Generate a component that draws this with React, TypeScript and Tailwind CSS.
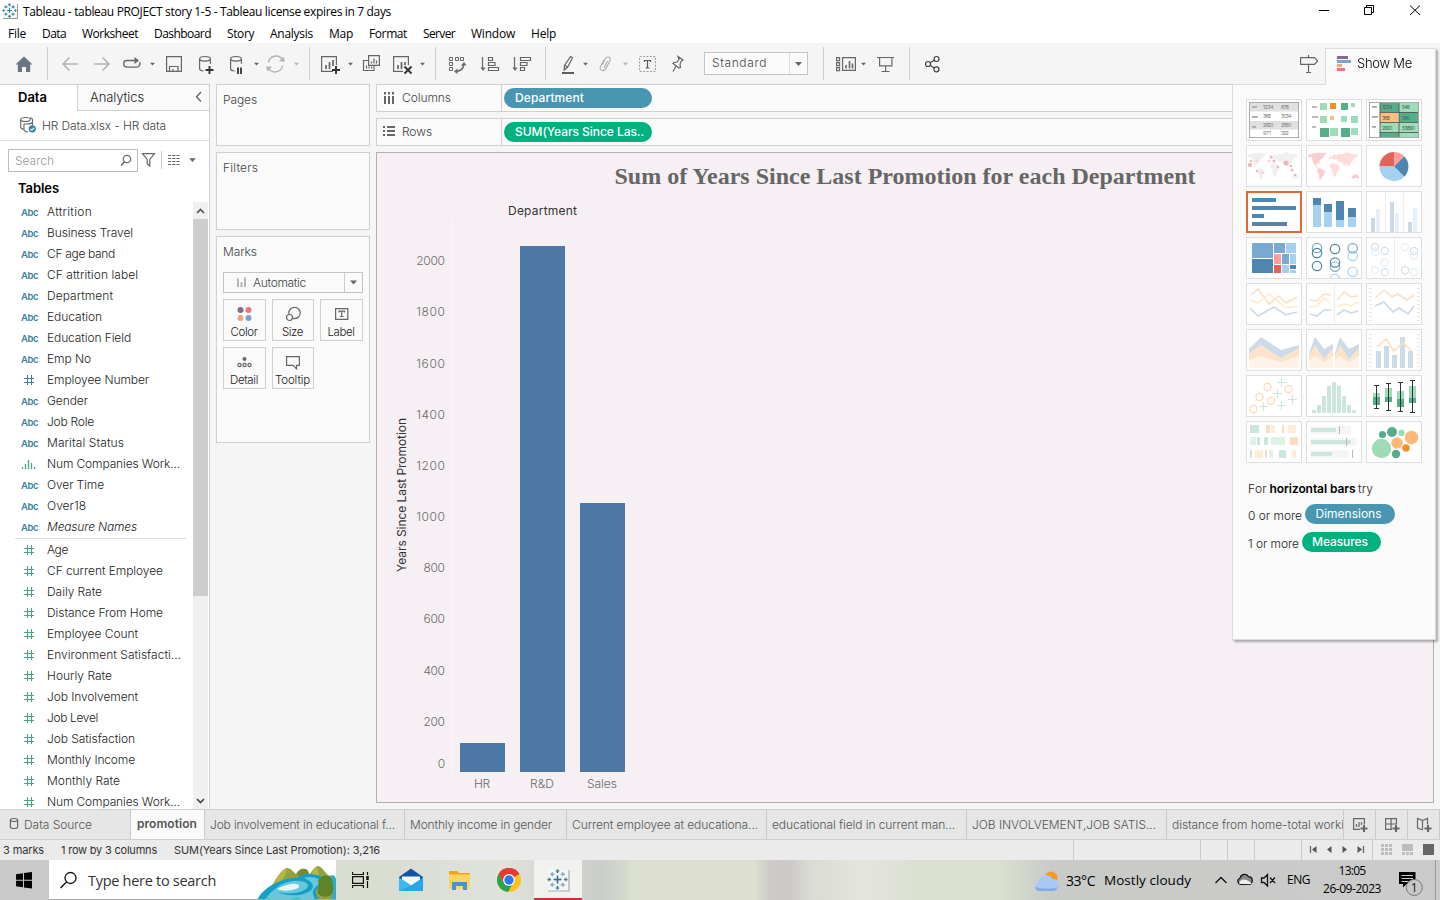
import React, { useLayoutEffect, useRef } from "react";

type Kids = { children?: React.ReactNode };

/* Single line of text whose tracking is adjusted so that it spans `w` pixels. */
function T({ w, className = "", children }: { w?: number; className?: string; children: string }) {
  const ref = useRef<HTMLSpanElement>(null);
  useLayoutEffect(() => {
    const el = ref.current;
    if (!el || !w) return;
    el.style.letterSpacing = "0px";
    const natural = el.getBoundingClientRect().width;
    el.style.letterSpacing = `${(w - natural) / children.length}px`;
  }, [w, children]);
  return (
    <span ref={ref} className={`inline-block shrink-0 whitespace-pre ${className}`}>
      {children}
    </span>
  );
}

/* Icon drawn in window coordinates. */
function Ico({ x, y, w, h, className = "", children }: { x: number; y: number; w: number; h: number; className?: string } & Kids) {
  return (
    <svg width={w} height={h} viewBox={`${x} ${y} ${w} ${h}`} className={`block shrink-0 ${className}`} fill="none" stroke="#666" strokeWidth="1.2">
      {children}
    </svg>
  );
}

function Tool({ x, w, children }: { x: number; w: number } & Kids) {
  return (
    <Ico x={x} y={43} w={w} h={41}>
      {children}
    </Ico>
  );
}

const Sep = () => <div className="my-1 w-px shrink-0 self-stretch bg-[#cfcfcf]" />;

function Caret({ x, y = 64, c = "#666", s = 2.5 }: { x: number; y?: number; c?: string; s?: number }) {
  return <path d={`M${x - s} ${y - 1.3}h${2 * s}l${-s} ${s + 0.4}z`} fill={c} stroke="none" />;
}

function Spark({ x, y, s, c = "#3f7f9f" }: { x: number; y: number; s: number; c?: string }) {
  const pts: [number, number, number][] = [
    [0, 0, 0.34], [-0.5, -0.5, 0.2], [0.5, -0.5, 0.2], [-0.5, 0.5, 0.2], [0.5, 0.5, 0.2],
    [0, -0.82, 0.18], [0, 0.82, 0.18], [-0.82, 0, 0.18], [0.82, 0, 0.18],
  ];
  return (
    <g stroke={c} strokeWidth={s * 0.15}>
      {pts.map(([a, b, r], i) => (
        <path key={i} d={`M${x + (a - r) * s} ${y + b * s}h${2 * r * s}M${x + a * s} ${y + (b - r) * s}v${2 * r * s}`} />
      ))}
    </g>
  );
}

function TitleBar() {
  return (
    <div className="flex h-[22px] items-center bg-white font-normal">
      <svg width="18" height="22" viewBox="0 0 18 22" className="ml-0.5 shrink-0" fill="none">
        <path d="M1 4h14v14H1z" fill="#f6f6f6" />
        <path d="M15.5 4v14.5H1" stroke="#999" />
        <Spark x={7.5} y={10.5} s={7.2} c="#2f86ad" />
      </svg>
      <T w={368} className="ml-[3px] pt-px font-['Open_Sans'] text-[12px] leading-[22px] text-black">Tableau - tableau PROJECT story 1-5 - Tableau license expires in 7 days</T>
      <div className="flex-1" />
      <Ico x={1310} y={0} w={120} h={22}>
        <g stroke="#000" strokeWidth="1">
          <path d="M1319 10.500h10" />
          <path d="M1364.500 7.500h7v7h-7zM1366.500 7.500v-2h7v7h-2" />
          <path d="M1410 5.500l10 9.500M1420 5.500l-10 9.500" />
        </g>
      </Ico>
      <div className="w-[10px]" />
    </div>
  );
}

const menus: [string, number, string][] = [
  ["File", 18, "ml-2"], ["Data", 24, "ml-4"], ["Worksheet", 56, "ml-4"], ["Dashboard", 57, "ml-4"], ["Story", 27, "ml-4"], ["Analysis", 43, "ml-4"],
  ["Map", 24, "ml-4"], ["Format", 38, "ml-4"], ["Server", 32, "ml-4"], ["Window", 44, "ml-4"], ["Help", 25, "ml-4"],
];

function MenuBar() {
  return (
    <div className="flex h-[21px] bg-white font-['Open_Sans'] text-[12px] leading-[23px] font-normal text-black">
      {menus.map(([m, w, c]) => (
        <T key={m} w={w} className={c}>{m}</T>
      ))}
    </div>
  );
}

function Toolbar() {
  return (
    <div className="flex h-[41px] bg-[#f5f5f5]">
      <Tool x={0} w={47}>
        <path d="M15.500 64.500L24 56.500l8.500 8h-2.300V72h-4.200v-5h-4v5h-4.200v-7.500z" fill="#6b7683" stroke="none" />
      </Tool>
      <Sep />
      <Tool x={48} w={261}>
        <g stroke="#b4b4b4" strokeWidth="1.6">
          <path d="M78 64H63M69.500 57.500L63 64l6.500 6.500" />
          <path d="M94 64h15M102.500 57.500L109 64l-6.500 6.500" />
          <path d="M268.500 62.500a7.500 7.500 0 0 1 14-2.500M282.500 65.500a7.500 7.500 0 0 1-14 2.500" strokeWidth="1.4" />
          <path d="M279 61.500h6l-1.500-5zM272 66.500h-6l1.500 5z" fill="#b4b4b4" stroke="none" />
        </g>
        <path d="M136 60.500h-9a3.300 3.300 0 0 0 0 6.600h9.500a3.300 3.300 0 0 0 3-5" strokeWidth="1.400" />
        <path d="M134.500 57l4.500 3.500-4.500 3.500z" fill="#666" stroke="none" />
        <Caret x={152.500} />
        <path d="M166.600 56.600h14.800v14.800h-14.800zM169.500 71v-4.500h8.500V71M173 71v-2" />
        <g>
          <path d="M199.600 58.800v9.700c0 1.500 1.500 2.300 4 2.500M210.400 58.800v5" />
          <ellipse cx="205" cy="58.800" rx="5.400" ry="2.300" />
          <path d="M209.500 66v8M205.500 70h8" stroke="#333" strokeWidth="1.900" />
        </g>
        <path d="M230.600 58.800v9.700c0 1.500 1.500 2.300 4 2.500M241.400 58.800v5" />
        <ellipse cx="236" cy="58.800" rx="5.400" ry="2.300" />
        <path d="M238 67.500v6.500M241 67.500v6.500" stroke="#333" strokeWidth="1.800" />
        <Caret x={256.500} />
        <Caret x={296.500} c="#b4b4b4" />
      </Tool>
      <Sep />
      <Tool x={310} w={125}>
        <path d="M333 71.400h-11.400V56.600h14.800V65" />
        <path d="M326 69v-4M329.500 69v-7M333 66v-6" strokeWidth="1.700" />
        <path d="M336 66v8M332 70h8" stroke="#333" strokeWidth="1.900" />
        <Caret x={350.500} />
        <path d="M368.600 55.600h10.800v9.800h-10.800zM368 60.500h-4.500v10h10.500v-4.500" />
        <path d="M371.500 63.500v-2M374 63.500v-5M376.500 63.500v-3M366.500 68.500v-3M369 68.500v-2M371.500 68.500v-2" />
        <path d="M403 71.400h-9.400V56.600h14.800V65" />
        <path d="M398 69v-4M401.500 69v-7M405 65v-3" strokeWidth="1.700" />
        <path d="M404.500 66.500l7 7M411.500 66.500l-7 7" stroke="#333" strokeWidth="1.900" />
        <Caret x={422.500} />
      </Tool>
      <Sep />
      <Tool x={436} w={109}>
        <path d="M449.500 57.500h3v3h-3zM455.500 57.500h3v3h-3zM460.500 57.500h3v3h-3zM449.500 62.500h3v3h-3zM449.500 67.500h3v3h-3z" strokeWidth="1" />
        <path d="M463.500 64.500c0 4-3 6.500-7.500 7" strokeWidth="1.500" />
        <path d="M461 65.500l3-3.500 2.500 3.500zM457.500 68.500l-3.500 3 3.500 2.500z" fill="#666" stroke="none" />
        <path d="M482.500 57v12M514.500 57v12" strokeWidth="1.200" />
        <path d="M480.500 67.500h5l-2.500 3.500zM512.500 67.500h5l-2.500 3.500z" fill="#666" stroke="none" />
        <path d="M488.500 57.500h4v3h-4zM488.500 62.500h6.500v3h-6.500zM488.500 67.500h10v3h-10z" />
        <path d="M520.500 57.500h10v3h-10zM520.500 62.500h6.500v3h-6.500zM520.500 67.500h4v3h-4z" />
      </Tool>
      <Sep />
      <Tool x={546} w={158}>
        <path d="M570.500 56.500l2 1.200-4.800 9.300-3.500 3 .3-4.500zM565 65.500l2.500 1.500" />
        <path d="M562 73h12" stroke="#555" strokeWidth="1.900" />
        <Caret x={585.500} />
        <path d="M602 65l3.500-6.500c2-3 6-1 4.500 2l-4 8c-2 4-7.500 1.500-5.500-2l3.500-6.500M604 68l3.500-7" stroke="#aaa" strokeWidth="1.100" />
        <Caret x={625.500} c="#b4b4b4" />
        <path d="M639.600 56.600h15.800v14.800h-15.800z" stroke="#999" strokeDasharray="2 1.400" strokeWidth="1" />
        <path d="M644.500 62v-1.500h6V62M647.500 60.500v7.500M645.500 68h4" stroke="#555" strokeWidth="1.200" />
        <path d="M678 56.500l5 3.500-1.500 1-1.500 3 .500 3.500-1.500.5-6-4.500 1-1 3.300-.5 1.700-2.800zM676 66l-3 5.500" />
      </Tool>
      <div className="mt-[9px] flex h-[23px] w-[104px] shrink-0 border border-[#c4c4c4] bg-[#fafafa] text-[12px] leading-[20px]">
        <div className="flex-1 border-r border-[#ddd] pl-[7px]">
          <T w={55} className="text-[#444]">Standard</T>
        </div>
        <svg width="17" height="21" viewBox="0 0 17 21"><path d="M5 9h7l-3.500 4z" fill="#666" /></svg>
      </div>
      <div className="w-[15px] shrink-0" />
      <Sep />
      <Tool x={824} w={85}>
        <path d="M836.600 57.600h3v3h-3zM836.600 62.600h3v3h-3zM836.600 67.600h3v3h-3zM842.600 57.600h12.800v12.800h-12.800z" />
        <path d="M846 68.500v-3.500M849.500 68.500v-7.500M852.500 68.500v-5" strokeWidth="1.600" />
        <Caret x={863.500} />
        <path d="M877 57.500h17M879.600 58v7.900h12.300V58M885.600 66v5M881.500 71.500h8" />
      </Tool>
      <Sep />
      <Tool x={910} w={60}>
        <g stroke="#444"><circle cx="928" cy="64" r="2.500" /><circle cx="936.500" cy="59" r="2.500" /><circle cx="936.500" cy="69.300" r="2.500" />
        <path d="M930.200 62.700l4-2.500M930.200 65.300l4 2.600" /></g>
      </Tool>
      <div className="flex-1" />
      <Tool x={1290} w={150}>
        <path d="M1300.600 57.600h14l3 3.400-3 3.400h-14zM1308.500 55v2.500M1308.500 64.500v8M1306 72.500h5" />
      </Tool>
    </div>
  );
}

type Kind = "abc" | "#" | "g" | "bar" | "it";
const fields: [string, number, Kind][] = [
  ["Attrition", 45, "abc"], ["Business Travel", 86, "abc"], ["CF age band", 68, "abc"], ["CF attrition label", 91, "abc"], ["Department", 66, "abc"],
  ["Education", 55, "abc"], ["Education Field", 84, "abc"], ["Emp No", 44, "abc"], ["Employee Number", 102, "#"], ["Gender", 41, "abc"],
  ["Job Role", 47, "abc"], ["Marital Status", 77, "abc"], ["Num Companies Work...", 133, "bar"], ["Over Time", 57, "abc"], ["Over18", 39, "abc"], ["Measure Names", 90, "it"],
];
const measures: [string, number, Kind][] = [
  ["Age", 21, "g"], ["CF current Employee", 116, "g"], ["Daily Rate", 55, "g"], ["Distance From Home", 116, "g"], ["Employee Count", 91, "g"],
  ["Environment Satisfacti...", 134, "g"], ["Hourly Rate", 65, "g"], ["Job Involvement", 91, "g"], ["Job Level", 51, "g"], ["Job Satisfaction", 88, "g"],
  ["Monthly Income", 88, "g"], ["Monthly Rate", 73, "g"], ["Num Companies Work...", 133, "g"],
];

function Field({ f: [name, w, kind] }: { f: [string, number, Kind] }) {
  return (
    <div className="flex h-[21px] items-center">
      <div className="flex w-[47px] shrink-0 pl-[21px]">
        {kind === "abc" || kind === "it" ? (
          <T w={17} className="mt-0.5 text-[9.5px] leading-3 font-semibold text-[#3c7f9c]">Abc</T>
        ) : kind === "bar" ? (
          <svg width="16" height="10" className="mt-0.5" stroke="#4aa585" strokeWidth="1.300"><path d="M1.500 9V7M4.500 9V4M7.500 9V0M10.500 9V3M13.500 9V7" /></svg>
        ) : (
          <svg width="14" height="10" className="ml-0.5" stroke={kind === "#" ? "#3c7f9c" : "#4aa585"} strokeWidth="1.100"><path d="M4.500 0v10M8.500 0v10M1 3.500h10M1 7.500h10" /></svg>
        )}
      </div>
      <T w={w} className={`text-[12px] leading-[21px] text-[#222] ${kind === "it" ? "italic" : ""}`}>{name}</T>
    </div>
  );
}

function DataPane() {
  return (
    <div className="flex w-[210px] shrink-0 flex-col border-t border-r border-[#d0d0d0] bg-white">
      <div className="flex h-[26px] shrink-0">
        <div className="flex w-[77px] pl-[18px]"><T w={29} className="text-[13px] leading-[25px] font-semibold text-black">Data</T></div>
        <div className="flex flex-1 justify-between border-b border-l border-[#d0d0d0] bg-[#fafafa] pl-3">
          <T w={54} className="text-[13px] leading-[25px] text-[#222]">Analytics</T>
          <Ico x={190} y={85} w={19} h={25}><path d="M201 92l-4.500 4.800 4.500 4.800" strokeWidth="1.400" /></Ico>
        </div>
      </div>
      <div className="flex h-[30px] shrink-0 items-center border-b border-[#ddd]">
        <Ico x={0} y={111} w={42} h={29}>
          <g strokeWidth="1.100">
            <ellipse cx="25.500" cy="119.500" rx="4.800" ry="2" /><path d="M20.700 119.500v7.500c0 1.500 1.500 2 3 2.300M23.500 124h3c3 0 5-.5 6-1.500v-2.500c0-1.500-1-2-2.500-2.200M32.500 121v4M24 124v5.500c0 1.500 1.500 2.300 4 2.500" />
            <circle cx="32.300" cy="128.800" r="3.600" fill="#3381a0" stroke="none" /><path d="M30.500 129l1.400 1.300 2.400-2.700" stroke="#fff" />
          </g>
        </Ico>
        <T w={124} className="text-[12px] leading-7 text-[#444]">HR Data.xlsx - HR data</T>
      </div>
      <div className="flex h-[61px] shrink-0 flex-col">
        <div className="flex h-[38px] items-center">
          <div className="ml-2 flex h-[23px] w-[130px] shrink-0 items-center justify-between border border-[#bbb] bg-white pl-1.5">
            <T w={39} className="pt-px text-[12px] leading-5 text-[#999]">Search</T>
            <Ico x={117} y={149} w={18} h={21}><circle cx="125" cy="158" r="3.700" /><path d="M122.500 161l-3.500 3.500" strokeWidth="1.600" /></Ico>
          </div>
          <Ico x={138} y={141} w={23} h={38}><path d="M142.500 153.600h12l-4.700 5.900v6.500l-2.600-2v-4.500z" strokeWidth="1.200" /></Ico>
          <div className="h-[18px] w-px bg-[#ccc]" />
          <Ico x={162} y={141} w={40} h={38}>
            <path d="M168 155.500h12M168 158.500h12M168 161.500h12M168 164.500h12" strokeDasharray="3.200 1" strokeWidth="1.100" /><Caret x={192.500} y={159.500} s={3.300} />
          </Ico>
        </div>
        <T w={41} className="ml-[18px] self-start text-[13px] leading-[19px] font-semibold text-black">Tables</T>
      </div>
      <div className="flex min-h-0 flex-1">
        <div className="min-w-0 flex-1 overflow-hidden">
          <div className="-mt-px">
          {fields.map((f) => <Field key={f[0]} f={f} />)}
          <div className="mt-px ml-[15px] h-px w-[171px] bg-[#ddd]" />
          {measures.map((f) => <Field key={f[0]} f={f} />)}
          </div>
        </div>
        <div className="flex w-[15px] shrink-0 flex-col bg-[#f0f0f0]">
          <svg width="15" height="17" fill="none" stroke="#555" strokeWidth="1.700"><path d="M4 11l3.500-3.500L11 11" /></svg>
          <div className="h-[377px] bg-[#cdcdcd]" />
          <div className="flex-1" />
          <svg width="15" height="16" fill="none" stroke="#444" strokeWidth="1.700"><path d="M4 6l3.500 3.500L11 6" /></svg>
        </div>
        <div className="w-px bg-white" />
      </div>
    </div>
  );
}

function MarkButton({ label, w, children }: { label: string; w: number } & Kids) {
  return (
    <div className="flex h-[42px] flex-col items-center border border-[#d0d0d0] bg-[#fafafa]">
      <svg width="24" height="24" viewBox="0 0 24 24" fill="none" stroke="#666" strokeWidth="1.200" className="mt-[1.5px] -ml-0.5 shrink-0">{children}</svg>
      <T w={w} className="-mt-px -ml-px text-[11.5px] leading-[14px] text-[#222]">{label}</T>
    </div>
  );
}

const boxCls = "border border-[#d0d0d0] bg-[#fafafa]";

function Cards() {
  return (
    <div className="ml-1.5 flex w-[154px] shrink-0 flex-col gap-1.5 text-[12px] text-[#444]">
      <div className={`flex h-[62px] pt-[5px] pl-1.5 ${boxCls}`}><T w={34} className="leading-5">Pages</T></div>
      <div className={`flex h-[78px] pt-[5px] pl-1.5 ${boxCls}`}><T w={35} className="leading-5">Filters</T></div>
      <div className={`flex h-[207px] flex-col px-1.5 pt-[5px] ${boxCls}`}>
        <T w={34} className="self-start leading-5">Marks</T>
        <div className="mt-2.5 flex h-[21px] shrink-0 border border-[#c4c4c4]">
          <svg width="29" height="19" fill="none" stroke="#b5b5b5" strokeWidth="2"><path d="M14 14V5.500M17.500 14V9M21 14V4.500" /></svg>
          <T w={53} className="leading-[19px]">Automatic</T>
          <div className="flex-1" />
          <svg width="18" height="19" className="border-l border-[#ccc]"><path d="M5 7.500h7l-3.500 4z" fill="#666" /></svg>
        </div>
        <div className="mt-1.5 grid grid-cols-[43px_42px_43px] gap-x-1.5 gap-y-1.5">
          <MarkButton label="Color" w={27}>
            <g stroke="none"><circle cx="8.500" cy="8" r="3" fill="#86698f" /><circle cx="16.500" cy="8" r="3" fill="#fb6c7c" /><circle cx="8.500" cy="16" r="3" fill="#f4a57c" /><circle cx="16.500" cy="16" r="3" fill="#7ca3cb" /></g>
          </MarkButton>
          <MarkButton label="Size" w={21}><circle cx="14.500" cy="11" r="5.700" /><circle cx="9.500" cy="15.500" r="3" fill="#fafafa" /></MarkButton>
          <MarkButton label="Label" w={27}><path d="M6.600 6.600h12.200v10.800H6.600zM10 10.500V9.200h5.500v1.300M12.700 9.500v5M11 14.500h3.500" /></MarkButton>
          <MarkButton label="Detail" w={28}><circle cx="12.500" cy="9" r="2" fill="#666" stroke="none" /><circle cx="7.500" cy="15" r="1.600" /><circle cx="12.500" cy="15" r="1.600" /><circle cx="17.500" cy="15" r="1.600" /></MarkButton>
          <MarkButton label="Tooltip" w={35}><path d="M6.600 6.600h12.800v8.800h-2.900v3.400l-3.400-3.400H6.600z" /></MarkButton>
        </div>
      </div>
    </div>
  );
}

function Shelf({ label, w, pill, pw, color, children }: { label: string; w: number; pill: string; pw: number; color: string } & Kids) {
  return (
    <div className={`flex h-7 shrink-0 items-center ${boxCls}`}>
      <svg width="24" height="26" viewBox="0 0 24 26" stroke="#666" strokeWidth="2" className="shrink-0">{children}</svg>
      <div className="flex w-[101px] self-stretch border-r border-[#d0d0d0] pl-px"><T w={w} className="text-[12px] leading-[26px] text-[#444]">{label}</T></div>
      <div className={`ml-0.5 flex h-5 w-[148px] rounded-full pl-[11px] text-white ${color}`}><T w={pw} className="text-[12px] leading-5 font-medium">{pill}</T></div>
    </div>
  );
}

const ticks: [string, number][] = [["2000", 260], ["1800", 311], ["1600", 363], ["1400", 414], ["1200", 465], ["1000", 516], ["800", 567], ["600", 618], ["400", 670], ["200", 721], ["0", 763]];
const bars: [string, number, number, number, number][] = [["HR", 460, 743, 482, 16], ["R&D", 520, 246, 542, 24], ["Sales", 580, 503, 602, 30]];

function Worksheet() {
  return (
    <div className="ml-1.5 flex min-w-0 flex-1 flex-col gap-1.5 pr-1.5">
      <Shelf label="Columns" w={49} pill="Department" pw={69} color="bg-[#4996b2]"><path d="M8 7v2.500M8 11v8M12 7v2.500M12 11v8M16 7v2.500M16 11v8" /></Shelf>
      <Shelf label="Rows" w={30} pill="SUM(Years Since Las.." pw={129} color="bg-[#00b180]"><path d="M6 8h2M10 8h8M6 12h2M10 12h8M6 16h2M10 16h8" /></Shelf>
      <div className="flex h-[651px] flex-col items-center border border-[#b3aeb1] bg-[#f6f0f4]">
        <T w={581} className="mt-1.5 font-['Liberation_Serif'] text-[24px] leading-[34px] font-bold text-[#666]">Sum of Years Since Last Promotion for each Department</T>
        <svg width="320" height="600" viewBox="377 193 320 600" className="self-start" fill="#6b6b6b" fontSize="12">
          <path d="M452.500 220v552" stroke="#fbf7fa" />
          <g className="font-normal">
            <text x="508" y="215" fill="#333" textLength="69">Department</text>
            <text transform="translate(406 572) rotate(-90)" fill="#333" textLength="154">Years Since Last Promotion</text>
          </g>
          {ticks.map(([t, y]) => (
            <text key={t} x={445 - t.length * 7.200} y={y + 5} textLength={t.length * 7.200}>{t}</text>
          ))}
          {bars.map(([n, x, y, c, w]) => (
            <g key={n}>
              <rect x={x} y={y} width="45" height={772 - y} fill="#4e79a7" />
              <text x={c - w / 2} y="788" textLength={w}>{n}</text>
            </g>
          ))}
        </svg>
      </div>
    </div>
  );
}

const B = "#4f86af", L = "#a5d0f0", G1 = "#9edcb8", G2 = "#56ad8a";
const P = ({ d, s, w = 1.3 }: { d: string; s: string; w?: number }) => <path d={d} stroke={s} strokeWidth={w} />;
const R = ({ f, r }: { f: string; r: number[][] }) => (
  <g fill={f} stroke="none">{r.map(([x, y, w, h], i) => <rect key={i} x={x} y={y} width={w} height={h} />)}</g>
);
const C = ({ s, r, c }: { s: string; r: number; c: number[][] }) => (
  <g stroke={s} strokeWidth="1.200">{c.map(([x, y], i) => <circle key={i} cx={x} cy={y} r={r} />)}</g>
);
const Nums = ({ r, c = "#777" }: { r: [string, number, number][]; c?: string }) => (
  <g fill={c} stroke="none" fontSize="5" className="font-normal">{r.map(([t, x, y], i) => <text key={i} x={x} y={y} textLength={t.length * 2.600}>{t}</text>)}</g>
);
const america = "M2 10l5-1.500 5-1 6 .5 3-.5-2 2.500-1 2-3 2.500-2 2 1 3-2-1.500-2 1 1 2.500 2 1.500-2-.5-3-3-1.500-4-1-3.500-3 .5zM12 23l4 1 3.500 2.500-2 4-2.500 3-.5 2-1-1-.5-5-2-3.500z";
const oldWorld = "M26 11l2-2 2.500 1.500L32 9l4 .5 4-2.500 5 1.500 7 1-.5 2-3 1-2 3.500-2 2.500-2 3-1.500-1-1-2.500-1.500 3-2-3.500-4-.5-2-3-2.500 1-2-2-2 1.500-1.500-1zM24 20l3-2 4 1 3 4-2.500 3-1.500 5-2 1-1.500-4-.5-4-2-1z";
const oz = "M46 31l4-2 3 2-.5 3-3-1-3.500 1z";

const thumbs: React.ReactNode[] = [
  <>
    <R f="#e0e0e0" r={[[4, 4, 48, 8.500], [4, 22, 48, 8.500]]} /><R f="#aaa" r={[[6, 7, 5, 1.800], [6, 17, 6, 1.800], [6, 27, 4, 1.800]]} />
    <rect x="3.500" y="3.500" width="49" height="35" stroke="#aaa" />
    <Nums r={[["1234", 17, 10.200], ["678", 35, 10.200], ["368", 17, 19.300], ["3034", 35, 19.300], ["2620", 17, 28.300], ["2550", 35, 28.300], ["971", 17, 36.300], ["322", 35, 36.300]]} />
  </>,
  <>
    <R f="#bbb" r={[[6, 7, 5, 2], [6, 17, 6, 2], [6, 27, 4, 2]]} />
    <R f={G1} r={[[14, 4, 7, 7], [45, 4, 4, 4], [14, 17, 7, 7], [35, 17, 6, 6], [45, 17, 7, 7], [24, 29, 8, 8], [45, 29, 7, 7]]} />
    <R f={G2} r={[[35, 4, 7, 7], [14, 29, 9, 9], [35, 29, 9, 9]]} /><R f="#f28e2b" r={[[24, 4, 6, 6]]} /><R f="#ffbe7d" r={[[24, 17, 4, 4]]} />
  </>,
  <>
    <R f={G2} r={[[14, 4, 19, 9], [33, 13, 19, 10], [14, 34, 19, 4]]} /><R f={G1} r={[[33, 4, 19, 9], [14, 24, 19, 9], [33, 24, 19, 9], [33, 34, 19, 4]]} /><R f="#ffbe7d" r={[[14, 14, 18, 9]]} />
    <path d="M14 4v34M33 4v34M14 13.500h38M14 23.500h38M14 33.500h38" stroke="#555" strokeWidth=".9" /><rect x="3.500" y="3.500" width="49" height="35" stroke="#aaa" />
    <R f="#aaa" r={[[6, 7, 5, 1.800], [6, 17, 6, 1.800], [6, 27, 4, 1.800]]} />
    <Nums c="#45605a" r={[["1234", 16, 10.200], ["546", 36, 10.200], ["368", 16, 20.500], ["340", 36, 20.500], ["2620", 16, 30.500], ["53890", 36, 30.500]]} />
  </>,
  <>
    <path d={america + oldWorld + oz} fill="#f0f0f0" stroke="none" />
    <g fill="#e79da5" fillOpacity=".7" stroke="none">{[[4, 20, 2.200], [5, 16, 1.300], [11, 26, 1.200], [25, 12, 1.400], [28, 16, 1.600], [32, 22, 1.200], [40, 18, 2.500], [45, 21, 1.300], [46, 25, 1.600], [49, 30, 1.300]].map(([x, y, r]) => <circle key={x} cx={x} cy={y} r={r} />)}</g>
    <g fill="#ffd6d6" stroke="none"><circle cx="11" cy="16" r="1.700" /><circle cx="23" cy="16" r="1.500" /><circle cx="16.500" cy="27.500" r="1.600" /></g>
  </>,
  <><path d={america + oz} fill="#f8cfcf" stroke="none" /><path d={oldWorld} fill="#fddcdc" stroke="none" /></>,
  <g stroke="none"><path d="M28 21.500V7a14.500 14.500 0 0 0-14.500 14.500z" fill="#e06559" /><path d="M28 21.500V7a14.500 14.500 0 0 1 10.200 4.200z" fill="#ff9d9a" /><path d="M28 21.500L38.200 11.200a14.500 14.500 0 0 1 0 20.500z" fill={B} /><path d="M28 21.500L38.200 31.700A14.500 14.500 0 0 1 13.500 21.500z" fill={L} /></g>,
  <R f={B} r={[[6, 7, 24, 4], [6, 15, 44, 4], [6, 23, 12, 4], [6, 31, 35, 4]]} />,
  <><R f={B} r={[[7, 7, 8, 7], [18, 13, 8, 8], [30, 10, 8, 19], [42, 17, 8, 9]]} /><R f={L} r={[[7, 14, 8, 22], [18, 21, 8, 15], [30, 29, 8, 7], [42, 26, 8, 10]]} /></>,
  <><R f="#ededed" r={[[19, 1, 1, 40], [37, 1, 1, 40]]} /><R f="#cbd9e6" r={[[5, 27, 4, 14], [24, 11, 4, 30], [42, 31, 4, 10]]} /><R f="#e4f1fb" r={[[10, 18, 4, 23], [29, 22, 4, 19], [47, 17, 4, 24]]} /></>,
  <><R f="#7aa9cf" r={[[6, 6, 21, 15], [28, 6, 11, 10], [36, 17, 7, 10]]} /><R f={B} r={[[6, 22, 21, 14], [44, 28, 6, 4]]} /><R f={L} r={[[40, 6, 10, 10], [44, 17, 6, 10], [36, 28, 7, 8], [44, 33, 6, 3]]} /><R f="#ff9d9a" r={[[28, 17, 7, 10]]} /><R f="#e06559" r={[[28, 28, 7, 8]]} /></>,
  <><C s={L} r={4.700} c={[[46.700, 19], [46.700, 34.700], [29, 42]]} /><C s="#7aa9cf" r={4.700} c={[[11, 11], [46.700, 11.300], [29, 29.700]]} /><C s={B} r={4.700} c={[[11, 16], [11, 29], [29, 12], [29, 25.500]]} /></>,
  <><path d="M28.500 1v40" stroke="#ededed" /><C s="#d5e0ea" r={3.600} c={[[9, 10], [18.700, 14], [18.700, 35.300], [48, 14], [39, 33.300]]} /><C s="#e2eef7" r={3.600} c={[[9, 14.700], [18.700, 25.700], [9, 33.300], [39, 10], [48, 18.700], [48, 35.300]]} /></>,
  <><P d="M5 12l7-6L23 21l10-8 7 7 11-6" s="#fde0c4" w={1.600} /><P d="M4 17l8 3 11-9 17 14 11-2" s="#fdecc8" w={1.600} /><P d="M4 25l8 8 16-9 12 8 11-3" s="#cbd9e8" w={1.600} /></>,
  <><path d="M28.500 1v40" stroke="#ededed" strokeWidth="1.300" /><P d="M4 17l7 1 7-7 7 1M31 17l7-8 7 5 7-1" s="#fde0c4" w={1.500} /><P d="M4 24l7-1 7-8 6 5M31 24l7-3 7 2 7-4" s="#fdecc8" w={1.500} /><P d="M4 31l7 2 7-6h7M31 32l7-5 7 3 7-2" s="#cbd9e8" w={1.600} /></>,
  <><path d="M4.500 5v34M52.500 5v34" stroke="#e6e6e6" strokeWidth="3" strokeDasharray="1 3" /><P d="M9 15l9-8 8 7 6-3 9 6 7-5" s="#fde0c4" w={1.600} /><P d="M9 23l9-4 9 10 6-4 9 6 6-8" s="#cbd9e8" w={1.600} /></>,
  <g stroke="none"><path d="M3 20L15 8l20 13 18-5v23H3z" fill="#cddbe8" /><path d="M3 24l12-8 20 13 18-10v20H3z" fill="#fde3c8" /><path d="M3 31l12-4 20 6 18-6v12H3z" fill="#fef3e6" /></g>,
  <g stroke="none"><path d="M3 24L9 8l9 12 9-5v24H3zM29 24l5-16 9 12 10-5v24H29z" fill="#cddbe8" /><path d="M3 26l6-10 9 14 9-11v20H3zM29 26l5-10 9 14 10-11v20H29z" fill="#fde3c8" /><path d="M3 31l6-4 9 6 9-6v12H3zM29 31l5-4 9 6 10-6v12H29z" fill="#fef3e6" /></g>,
  <><path d="M4.500 5v34M52.500 5v34" stroke="#e6e6e6" strokeWidth="3" strokeDasharray="1 3" /><R f="#cddbe8" r={[[10, 22, 5, 17], [18, 17, 5, 22], [26, 26, 5, 13], [34, 8, 5, 31], [42, 22, 5, 17]]} /><P d="M11 18l9-8 8 12 9-8 9 8" s="#fde0c4" w={1.600} /></>,
  <><C s="#fdd9b5" r={3.600} c={[[7.500, 34], [13.500, 22], [21.500, 12], [25, 26], [42.500, 14]]} /><P d="M13 31.500h9M17.500 27v9M27 18.500h9M31.500 14v9M31 7.500h9M35.500 3v9M31 30.500h9M35.500 26v9M42 24.500h9M46.500 20v9" s="#cbe6da" w={1.100} /></>,
  <R f="#cbe6da" r={[[6, 35, 4, 3], [11, 30, 4, 8], [16, 21, 4, 17], [21, 11, 4, 27], [26, 7, 4, 31], [31, 11, 4, 27], [36, 21, 4, 17], [41, 30, 4, 8], [46, 35, 4, 3]]} />,
  <><R f={G1} r={[[7, 18, 7, 4], [19, 13, 7, 9], [31, 16, 7, 8], [43, 11, 7, 12]]} /><R f={G2} r={[[7, 22, 7, 8], [19, 22, 7, 5], [31, 24, 7, 8], [43, 23, 7, 5]]} /><P d="M10.500 10v24M8 10.500h5M8 33.500h5M22.500 8v28M20 8.500h5M20 35.500h5M34.500 7v30M32 7.500h5M32 36.500h5M46.500 5v33M44 5.500h5M44 37.500h5" s="#333" w={1} /></>,
  <><R f="#cbe6da" r={[[4, 4, 9, 8], [11, 16, 3, 8], [33, 29, 7, 8], [4, 29, 2, 8], [18, 16, 4, 8]]} /><R f="#e0f2e8" r={[[4, 16, 6, 8], [25, 16, 14, 8], [23, 29, 4, 8]]} /><R f="#fcdcc0" r={[[20, 4, 4, 8], [36, 4, 2, 8], [44, 16, 8, 8], [19, 29, 2, 8]]} /><R f="#feebd8" r={[[25, 4, 4, 8], [42, 4, 8, 8], [9, 29, 8, 8], [46, 29, 4, 8]]} /></>,
  <><R f="#f5f5f5" r={[[5, 5, 40, 8], [5, 17, 46, 8], [5, 29, 38, 8]]} /><R f="#cbe6da" r={[[5, 7, 25, 4], [5, 19, 40, 4], [5, 31, 21, 4]]} /><R f="#b8b8b8" r={[[33, 5, 1, 8], [40, 17, 1, 8], [46, 29, 1, 8]]} /></>,
  <g stroke="none"><circle cx="15.500" cy="27.500" r="9.700" fill={G1} /><circle cx="16.500" cy="13.500" r="3.600" fill={G2} /><circle cx="26" cy="11" r="5" fill={G2} /><circle cx="35.500" cy="12" r="3.200" fill={G1} /><circle cx="45.500" cy="16.500" r="6.800" fill="#ffb977" /><circle cx="31" cy="22" r="5.800" fill="#ffb977" /><circle cx="40" cy="27" r="3.800" fill="#f28e2b" /><circle cx="30" cy="33" r="4.200" fill={G2} /></g>,
];

function ShowMe() {
  return (
    <div className="absolute top-12 right-1 flex w-[204px] flex-col items-end drop-shadow-[2px_2px_1px_rgba(0,0,0,0.3)]">
      <div className="relative z-10 flex h-[37px] w-[111px] items-center border border-b-0 border-[#dcdcdc] bg-[#fafafa]">
        <svg width="31" height="36" className="shrink-0"><path d="M11 7h11v3H11z" fill="#86698f" /><path d="M11 11h14v3H11z" fill="#7ca3cb" /><path d="M11 15h5v3h-5z" fill="#f4a57c" /><path d="M11 19h8v3h-8z" fill="#fb6c7c" /></svg>
        <T w={55} className="-mt-2 text-[13px] leading-5 text-black">Show Me</T>
      </div>
      <div className="-mt-px h-[556px] w-[204px] border border-[#dcdcdc] bg-[#fafafa] pt-3.5 pl-[13px]">
        <div className="grid grid-cols-[56px_56px_56px] gap-1">
          {thumbs.map((t, i) => (
            <div key={i} className={`h-[42px] bg-white ${i === 6 ? "outline-2 -outline-offset-2 outline-[#de6a38]" : "outline -outline-offset-1 outline-[#dedede]"}`}>
              <svg width="56" height="42" viewBox="0 0 56 42" fill="none" className="block">{t}</svg>
            </div>
          ))}
        </div>
        <div className="mt-4 ml-0.5 flex h-5 items-center gap-[2.5px] text-[12px] text-[#222]">
          <T w={19}>For</T>
          <T w={86} className="font-semibold text-black">horizontal bars</T>
          <T w={15}>try</T>
        </div>
        <div className="mt-[5px] ml-0.5 flex h-5 gap-[3px] text-[12px] text-[#222]">
          <T w={54} className="pt-0.5 leading-5">0 or more</T>
          <div className="flex h-5 w-[90px] rounded-full bg-[#4996b2] pl-[10.5px]"><T w={66} className="leading-[19px] font-normal text-white">Dimensions</T></div>
        </div>
        <div className="mt-2 ml-0.5 flex h-5 gap-[3px] text-[12px] text-[#222]">
          <T w={51} className="pt-0.5 leading-5">1 or more</T>
          <div className="flex h-5 w-[79px] rounded-full bg-[#00b180] pl-[10px]"><T w={56} className="leading-5 font-medium text-white">Measures</T></div>
        </div>
      </div>
    </div>
  );
}

const tabs: [string, number, string][] = [
  ["Job involvement in educational f...", 185, "w-[200px]"], ["Monthly income in gender", 142, "w-[162px]"], ["Current employee at educationa...", 186, "w-[200px]"],
  ["educational field in current man...", 183, "w-[200px]"], ["JOB INVOLVEMENT,JOB SATIS...", 184, "w-[200px]"], ["distance from home-total worki", 172, "w-[177px]"],
];

function SheetTabs() {
  return (
    <div className="flex h-[31px] border-y border-[#cfcfcf] bg-[#e6e6e6] text-[12px] leading-[30px] text-[#555]">
      <div className="flex w-[131px] shrink-0 border-r border-[#cbcbcb]">
        <Ico x={0} y={810} w={24} h={29}><ellipse cx="14" cy="820" rx="3.600" ry="1.500" /><path d="M10.400 820v7c0 2 7.200 2 7.200 0v-7" /></Ico>
        <T w={68}>Data Source</T>
      </div>
      <div className="w-[74px] shrink-0 border-r border-[#cbcbcb] bg-[#fafafa] pl-1.5 leading-[28px]"><T w={60} className="font-semibold text-[#555]">promotion</T></div>
      {tabs.map(([t, w, c]) => (
        <div key={t} className={`shrink-0 overflow-hidden border-r border-[#cbcbcb] pl-[5px] ${c}`}><T w={w}>{t}</T></div>
      ))}
      <div className="w-8 shrink-0 border-r border-[#cbcbcb]"><Ico x={1344} y={810} w={31} h={29}><path d="M1360 829.400h-6.400v-10.800h10.800v6M1356.500 827v-3M1359 827v-5M1361.500 825v-3" /><path d="M1364 825v7M1360.500 828.500h7" strokeWidth="2" /></Ico></div>
      <div className="w-8 shrink-0 border-r border-[#cbcbcb]"><Ico x={1376} y={810} w={31} h={29}><path d="M1392 829.400h-6.400v-10.800h10.800v6M1391 818.500v11M1385.500 824h11" /><path d="M1396 825v7M1392.500 828.500h7" strokeWidth="2" /></Ico></div>
      <div className="w-8 shrink-0 border-r border-[#cbcbcb]"><Ico x={1408} y={810} w={31} h={29}><path d="M1422.500 829.500v-9l-5-2v9.500l5 2M1422.500 820.500l5-2v6" /><path d="M1428 825v7M1424.500 828.500h7" strokeWidth="2" /></Ico></div>
    </div>
  );
}

function StatusBar() {
  const cell = "h-5 shrink-0 border-l border-[#cbcbcb]";
  return (
    <div className="flex h-5 bg-[#ebebeb] text-[11px] leading-5 font-normal text-[#333]">
      <T w={41} className="ml-[3px]">3 marks</T>
      <T w={96} className="ml-[17px]">1 row by 3 columns</T>
      <T w={206} className="ml-[17px]">SUM(Years Since Last Promotion): 3,216</T>
      <div className="flex-1" />
      <div className={`w-[127px] ${cell}`} /><div className={`w-[27px] ${cell}`} /><div className={`w-[27px] ${cell}`} /><div className={`w-[47px] ${cell}`} />
      <div className={`w-[71px] ${cell}`}>
        <Ico x={1302} y={840} w={70} h={20}>
          <path d="M1310.500 846v7M1363.500 846v7" strokeWidth="1.300" />
          <path d="M1316.500 846v7l-4.500-3.500zM1331.500 846v7l-4.500-3.500zM1342.500 846v7l4.500-3.500zM1357.500 846v7l4.500-3.500z" fill="#555" stroke="none" />
        </Ico>
      </div>
      <div className={`w-[68px] ${cell}`}>
        <Ico x={1373} y={840} w={67} h={20}>
          <R f="#bdbdbd" r={[[1381, 844, 3, 3], [1385, 844, 3, 3], [1389, 844, 3, 3], [1381, 848, 3, 3], [1385, 848, 3, 3], [1389, 848, 3, 3], [1381, 852, 3, 3], [1385, 852, 3, 3], [1389, 852, 3, 3], [1402, 844, 11, 7], [1402, 852, 3, 3], [1406, 852, 3, 3], [1410, 852, 3, 3]]} />
          <R f="#666" r={[[1423, 844, 11, 11]]} />
        </Ico>
      </div>
    </div>
  );
}

function Taskbar() {
  return (
    <div className="flex h-10 bg-[linear-gradient(90deg,#d9ddd2_0px,#d9ddd2_400px,#e0e3dd_500px,#cbcdca_600px,#d2d6cc_620px,#dbdfcd_632px,#dcdfce_755px,#cdc9c8_770px,#cdc9c8_790px,#dadbd4_810px,#e4e5df_865px,#dadfcf_925px,#dadfcf_1000px,#c9cbc8_1050px,#cacbca_1440px)] font-['Open_Sans'] font-normal text-black">
      <div className="w-[49px] shrink-0 bg-[#c9c9c9]"><Ico x={0} y={860} w={49} h={40}><path d="M16 874.300l7-1v6.500h-7zM24 873.100l8-1.100v7.800h-8zM16 880.800h7v6.500l-7-1zM24 880.800h8v7.800l-8-1.100z" fill="#000" stroke="none" /></Ico></div>
      <div className="flex w-[287px] shrink-0 border-b border-[#aaa] bg-white">
        <Ico x={49} y={860} w={39} h={39}><circle cx="70.500" cy="878" r="5.500" stroke="#111" strokeWidth="1.300" /><path d="M66.500 882l-6 6" stroke="#111" strokeWidth="1.400" /></Ico>
        <T w={128} className="text-[14.5px] leading-[41px] text-[#333]">Type here to search</T>
        <div className="flex-1" />
        <Ico x={257} y={860} w={79} h={39}>
          <g stroke="none">
            <path d="M270 890c4-9 12-21 17-22 4 0 6 4 9 6 2-4 5-6 8-5 3 1 4 4 6 5 3-5 6-8 8-8 5 1 8 9 12 10 3-1 5 2 6 5v19h-66z" fill="#8fa33c" />
            <path d="M272 886c4-8 10-17 15-18 0 6-4 12-10 17zM312 872c2-4 4-6 5-5 3 6 1 11 3 16-5-2-8-6-8-11z" fill="#b7b44b" />
            <path d="M303 869c5-1 7 4 5 9-4 2-8-2-11-4 1-2 3-4 6-5z" fill="#718c34" />
            <path d="M257 900c6-12 22-21 37-22 6 0 7-4 14-4 10 0 17 3 17 8-1 6-12 5-9 12l3 6z" fill="#159fc8" />
            <path d="M274 890c6-6 16-10 26-9 8 1 10 5 6 8-7 5-20 5-28 3 10 5 25 4 32-1 7-6 0-10-6-13 5-2 12-1 16 2 3 4-9 7-7 14l2 6h-50c3-5 6-8 9-10z" fill="#65c8dc" />
            <path d="M277 889c7-4 15-6 20-5 5 2 1 5-5 6-5 1-11 1-15-1z" fill="#e6f6f4" />
            <path d="M268 898c10 3 22 2 30-1l4 3h-36z" fill="#26ceb0" />
            <path d="M318 881c3-6 9-7 14-3 3 5 3 13-1 17-5 3-11 2-13-2-1-4 2-7 0-12z" fill="#5f8425" />
            <path d="M330 876c3-2 6 0 6 4v19h-5c3-8 3-16-1-23z" fill="#31aaca" />
          </g>
        </Ico>
      </div>
      <Ico x={336} y={860} w={198} h={40}>
        <g stroke="#111" strokeWidth="1.200"><path d="M352.600 876.600h10.800v6.800h-10.800zM352.600 872v2.500h10.800V872M352.600 888v-2.500h10.800v2.500M367.500 872v3M367.500 881v7" /><path d="M367.500 876v4" strokeWidth="2.500" /></g>
        <g stroke="none">
          <path d="M399 877l12-8.500 12 8.500v3h-24z" fill="#1156a5" /><path d="M402 876.500h18V886h-18z" fill="#f4f8fb" /><path d="M399 877.500l12 8 12-8V891h-24z" fill="#2ba5ea" /><path d="M399 877.500l12 8-12 5.500z" fill="#3db8f3" />
          <path d="M449 871h8l2 2h11v16h-21z" fill="#eaa621" /><path d="M449 874.500h21V889h-21z" fill="#fcd462" /><path d="M452 882h15v8h-4v-4h-7v4h-4z" fill="#4294dd" />
          <circle cx="509" cy="880" r="12" fill="#fcc31e" /><path d="M509 880L498.600 874A12 12 0 0 1 519.400 874z" fill="#e33b2e" /><path d="M498.600 874A12 12 0 0 0 508 892l5.500-9.500-9.700 0z" fill="#2ba24c" /><path d="M509 874h10.400A12 12 0 0 0 498.600 874l5 8.500z" fill="#e33b2e" />
          <circle cx="509" cy="880" r="5.900" fill="#fff" /><circle cx="509" cy="880" r="4.700" fill="#2a78ee" />
        </g>
      </Ico>
      <div className="w-12 shrink-0 border-b-2 border-[#d2302c] bg-[#f1f1ef]">
        <Ico x={534} y={860} w={48} h={38}><path d="M548 869.500h21v21h-21z" fill="#f5f5f5" stroke="none" /><path d="M569 870v21h-21" stroke="#aaa" /><g><Spark x={557.500} y={879.500} s={10.500} c="#85aec6" /><path d="M553.500 879.500h8M557.500 875.500v8M557.500 870v3M557.500 886v3M548.500 879.500h2.500M564 879.500h2.500" stroke="#36708e" strokeWidth="1.300" /></g></Ico>
      </div>
      <div className="flex-1" />
      <Ico x={1030} y={860} w={36} h={40}>
        <circle cx="1051" cy="878" r="6.500" fill="#f79a20" stroke="none" /><path d="M1039 891a5 5 0 0 1-.5-9.500 7.500 7.500 0 0 1 14-2.500 6 6 0 0 1 1 12z" fill="#acc9f3" stroke="none" /><path d="M1035 887a5 5 0 0 0 4 4h14.500a5 5 0 0 0 4-4c-7 2-15 2-22.500 0z" fill="#84abe8" stroke="none" />
      </Ico>
      <T w={29} className="text-[14px] leading-[41px]">33°C</T>
      <T w={87} className="ml-[9px] text-[13.5px] leading-[41px]">Mostly cloudy</T>
      <Ico x={1191} y={860} w={96} h={40}>
        <g stroke="#111" strokeWidth="1.300"><path d="M1215.500 883l5.500-5.500 5.500 5.500" /><path d="M1241 884.500c-3.500-.5-4.500-5-1-6.300 1-4.500 7-5 8.500-1.500 4 0 5 5 2 7.500z" fill="#888" strokeWidth="1.200" /><path d="M1239 883.500c1-5 7-5 11-1.500l2 2h-12z" fill="#eee" stroke="none" />
        <path d="M1261.500 878v4.500h2.500l3.500 3.500v-11.500l-3.500 3.500zM1270 877.500l5 5.500M1275 877.500l-5 5.500" /></g>
      </Ico>
      <T w={23} className="text-[12px] leading-10">ENG</T>
      <div className="ml-[13px] flex w-[58px] shrink-0 flex-col items-center pt-0.5 text-[12px] leading-[18px]">
        <T w={27}>13:05</T>
        <T w={58}>26-09-2023</T>
      </div>
      <Ico x={1381} y={860} w={54} h={40}>
        <path d="M1399 872h16.500v12h-9l-3.500 3.500V884h-4z" fill="#000" stroke="none" /><path d="M1401.500 875.500h11.500M1401.500 878.500h11.500M1401.500 881.500h7" stroke="#ccc" strokeWidth="1" />
        <circle cx="1414.300" cy="887.500" r="8" fill="#c8c8c8" stroke="#777" strokeWidth="1" />
        <text x="1414.300" y="892" textAnchor="middle" fontSize="12" fill="#111" stroke="none">1</text>
      </Ico>
      <div className="w-[5px] shrink-0 border-l border-[#999]" />
    </div>
  );
}

export default function App() {
  return (
    <div className="relative flex h-[900px] w-[1440px] flex-col overflow-hidden bg-[#f5f5f5] font-['Inter',sans-serif] font-light">
      <TitleBar />
      <MenuBar />
      <Toolbar />
      <div className="flex h-[725px] shrink-0 overflow-hidden">
        <DataPane />
        <Cards />
        <Worksheet />
      </div>
      <SheetTabs />
      <StatusBar />
      <Taskbar />
      <ShowMe />
    </div>
  );
}
